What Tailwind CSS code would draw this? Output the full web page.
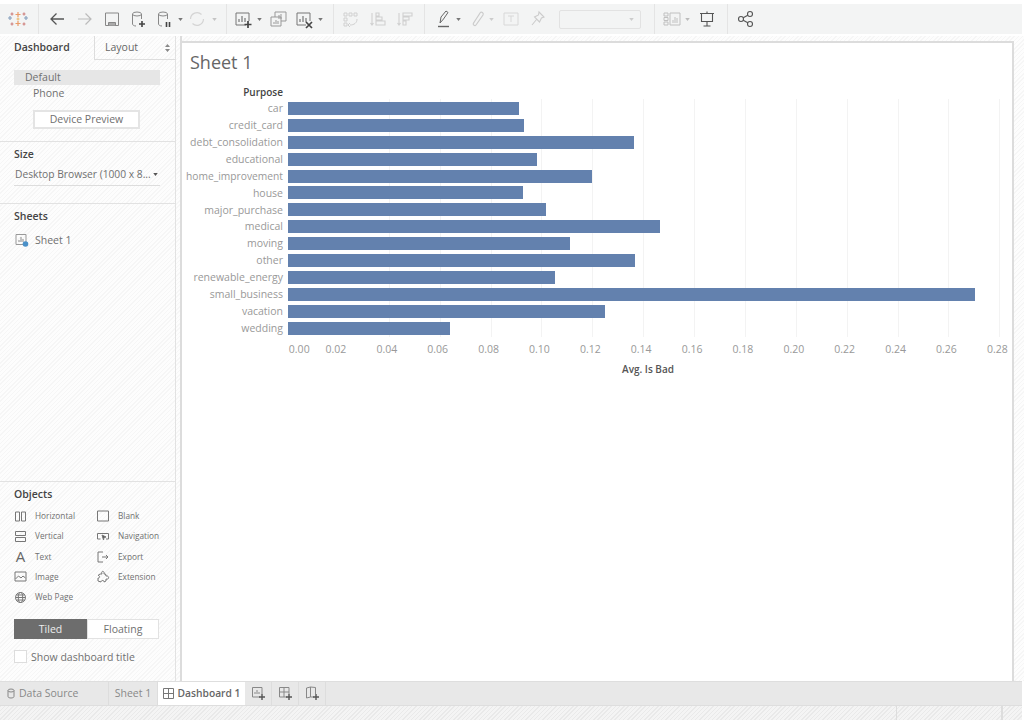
<!DOCTYPE html>
<html><head><meta charset="utf-8"><script src="https://cdn.jsdelivr.net/npm/@tailwindcss/browser@4"></script></head>
<body class="bg-white">
<div class="w-[1024px] h-[720px] overflow-hidden flex flex-col font-['Open_Sans',sans-serif] text-[#707070] text-[10.5px] leading-none">
  <!-- toolbar -->
  <div class="h-[4px] bg-white"></div>
  <div class="h-[30px] w-[1022px] bg-[#f3f4f4] flex items-center shrink-0">
    <svg class="w-[36px] h-5 opacity-70" viewBox="-8 -10 36 20"><g stroke-width="1.2" fill="none"><path d="M10-7v5M7.500-4.500h5M10 2v5M7.500 4.500h5" stroke="#e8762d"/><path d="M2-3v4M0-1h4M16-1h4M18-3v4" stroke="#5b7fa8"/><path d="M4-6.500v3M2.500-5h3M16-6.500v3M14.500-5h3M4 3.500v3M2.500 5h3M16 3.500v3M14.500 5h3" stroke="#c0504d"/><path d="M8.500 0h3M10-1.500v3" stroke="#e8a33d"/></g></svg>
    <div class="w-px h-[30px] bg-[#e4e4e4] ml-[2px]"></div>
    <svg class="w-5 h-5 ml-[8px]" viewBox="0 0 20 20" fill="none" stroke="#555" stroke-width="1.3"><path d="M17 10H4M9.500 4.500 4 10l5.500 5.500"/></svg>
    <svg class="w-5 h-5 ml-[8px]" viewBox="0 0 20 20" fill="none" stroke="#bbb" stroke-width="1.2"><path d="M3 10h13M10.500 4.500 16 10l-5.500 5.500"/></svg>
    <svg class="w-5 h-5 ml-[7px]" viewBox="0 0 20 20" fill="none" stroke="#888" stroke-width="1"><path d="M3.500 4h13v12.500h-13z"/><path d="M6.500 16.500v-3h7v3" fill="#aaa"/></svg>
    <svg class="w-5 h-5 ml-[6px]" viewBox="0 0 20 20" fill="none" stroke="#888" stroke-width="1"><ellipse cx="9" cy="5" rx="4.500" ry="2"/><path d="M4.500 5v10c0 1 1.500 2 3.500 2M13.500 5v5"/><path d="M14 12v6M11 15h6" stroke="#444" stroke-width="1.6"/></svg>
    <svg class="w-5 h-5 ml-[6px]" viewBox="0 0 20 20" fill="none" stroke="#888" stroke-width="1"><ellipse cx="9" cy="5" rx="4.500" ry="2"/><path d="M4.500 5v10c0 1 1.500 2 3.500 2M13.500 5v5"/><path d="M12.500 13v5M15.500 13v5" stroke="#444" stroke-width="1.6"/></svg>
    <svg class="w-[5px] h-[3px] ml-[4px] mr-px" viewBox="0 0 6 4"><path d="M0 0h6L3 4z" fill="#777"/></svg>
    <svg class="w-5 h-5 ml-[3px]" viewBox="0 0 20 20" fill="none" stroke="#d4d4d4" stroke-width="1.2"><path d="M3.500 10a6.500 6.500 0 0 1 11-4.500M16.500 10a6.500 6.500 0 0 1-11 4.500"/></svg>
    <svg class="w-[5px] h-[3px] ml-[5px] mr-px" viewBox="0 0 6 4"><path d="M0 0h6L3 4z" fill="#c4c4c4"/></svg>
    <div class="w-px h-[30px] bg-[#e4e4e4] ml-[8px]"></div>
    <svg class="w-5 h-5 ml-[6px]" viewBox="0 0 20 20" fill="none" stroke="#777" stroke-width="1"><path d="M13 16H3V4h13v8"/><path d="M6 13v-3M9 13V7M12 13V9" stroke-width="1.2"/><path d="M15 12v7M11.500 15.500h7" stroke="#444" stroke-width="1.7"/></svg>
    <svg class="w-[5px] h-[3px] ml-[4px] mr-px" viewBox="0 0 6 4"><path d="M0 0h6L3 4z" fill="#777"/></svg>
    <svg class="w-5 h-5 ml-[5px]" viewBox="0 0 20 20" fill="none" stroke="#999" stroke-width="1"><path d="M7 3h11v9H7z" fill="#f3f4f4"/><path d="M3 8h10v9H3z" fill="#f3f4f4"/><path d="M6 15v-2M8 15v-4M10 15v-3M11 10V6M13 10V5"/></svg>
    <svg class="w-5 h-5 ml-[6px]" viewBox="0 0 20 20" fill="none" stroke="#777" stroke-width="1"><path d="M12 16H3V4h13v8"/><path d="M6 13v-3M9 13V7M12 13V9" stroke-width="1.2"/><path d="m12 13 6 6m0-6-6 6" stroke="#444" stroke-width="1.7"/></svg>
    <svg class="w-[5px] h-[3px] ml-[4px] mr-px" viewBox="0 0 6 4"><path d="M0 0h6L3 4z" fill="#777"/></svg>
    <div class="w-px h-[30px] bg-[#e4e4e4] ml-[9px]"></div>
    <svg class="w-5 h-5 ml-[7px]" viewBox="0 0 20 20" fill="none" stroke="#d0d0d0" stroke-width="1"><path d="M3 4h3v3H3zM8 4h3v3H8zM13 4h3v3h-3zM3 9h3v3H3zM3 14h3v3H3zM16 10c0 4-3 6-7 6M9 14l-2 2 2 2"/></svg>
    <svg class="w-5 h-5 ml-[7px]" viewBox="0 0 20 20" fill="none" stroke="#d0d0d0" stroke-width="1.1"><path d="M4 4v12M2.500 14 4 16l1.500-2M8 4h3v3H8zM8 8h6v3H8zM8 12h9v4H8z"/></svg>
    <svg class="w-5 h-5 ml-[7px]" viewBox="0 0 20 20" fill="none" stroke="#d0d0d0" stroke-width="1.1"><path d="M4 4v12M2.500 14 4 16l1.500-2M8 4h9v3H8zM8 8h6v3H8zM8 12h3v4H8z"/></svg>
    <div class="w-px h-[30px] bg-[#e4e4e4] ml-[9px]"></div>
    <svg class="w-5 h-5 ml-[9px]" viewBox="0 0 20 20" fill="none" stroke="#666" stroke-width="1"><path d="M6 14 7 8l5-6 2 1.500-4.500 6.500z"/><path d="M4 17.500h11" stroke-width="1.4"/></svg>
    <svg class="w-[5px] h-[3px] ml-[2px] mr-px" viewBox="0 0 6 4"><path d="M0 0h6L3 4z" fill="#777"/></svg>
    <svg class="w-5 h-5 ml-[5px]" viewBox="0 0 20 20" fill="none" stroke="#ccc" stroke-width="1.2"><path d="M6 15 13 4c1.500-2 4 0 3 2l-7 10c-1 1.500-3.500 0-2.500-2l6-9"/></svg>
    <svg class="w-[5px] h-[3px] ml-[2px] mr-px" viewBox="0 0 6 4"><path d="M0 0h6L3 4z" fill="#ccc"/></svg>
    <svg class="w-5 h-5 ml-[6px]" viewBox="0 0 20 20" fill="none" stroke="#d8d8d8" stroke-width="1"><path d="M3 4h14v12H3zM7 7h6M10 7v6"/></svg>
    <svg class="w-5 h-5 ml-[7px]" viewBox="0 0 20 20" fill="none" stroke="#ccc" stroke-width="1.1"><path d="m11 3 5 5-2.500 1-2 4-5-5 4-2zM8.500 10.500 4 16"/></svg>
    <div class="w-[82px] h-[19px] ml-[11px] border border-[#e2e2e2] rounded-[2px] flex items-center justify-end pr-[6px]"><svg class="w-[5px] h-[3px]" viewBox="0 0 6 4"><path d="M0 0h6L3 4z" fill="#ccc"/></svg></div>
    <div class="w-px h-[30px] bg-[#e4e4e4] ml-[13px]"></div>
    <svg class="w-5 h-5 ml-[7px]" viewBox="0 0 20 20" fill="none" stroke="#c0c0c0" stroke-width="1"><path d="M2 4h4v3H2zM2 8.500h4v3H2zM2 13h4v3H2zM8 4h10v12H8z"/><path d="M11 14v-3M13 14V8M15 14v-5"/></svg>
    <svg class="w-[5px] h-[3px] ml-[3px] mr-px" viewBox="0 0 6 4"><path d="M0 0h6L3 4z" fill="#bbb"/></svg>
    <svg class="w-5 h-5 ml-[6px]" viewBox="0 0 20 20" fill="none" stroke="#555" stroke-width="1.1"><path d="M3 4.500h14M4.500 4.500v8h11v-8M10 12.500V17M6.500 17h7M10 2.500v2"/></svg>
    <div class="w-px h-[30px] bg-[#e4e4e4] ml-[10px]"></div>
    <svg class="w-5 h-5 ml-[8px]" viewBox="0 0 20 20" fill="none" stroke="#555" stroke-width="1.1"><circle cx="5" cy="10" r="2.500"/><circle cx="14" cy="5" r="2.500"/><circle cx="14" cy="15" r="2.500"/><path d="m7.200 8.800 4.600-2.600M7.200 11.200l4.600 2.600"/></svg>
  </div>
  <div class="h-[2px] shrink-0"></div>

  <div class="flex h-[645px] shrink-0 bg-[repeating-linear-gradient(135deg,#f6f6f6_0,#f6f6f6_1px,#fdfdfd_1px,#fdfdfd_3px)]">
    <!-- left panel -->
    <aside class="w-[176px] shrink-0 border-r border-[#e2e2e2] flex flex-col">
      <div class="flex h-[24px] shrink-0">
        <div class="w-[94px] pl-[14px] flex items-center font-semibold text-[#444] -mt-px">Dashboard</div>
        <div class="flex-1 flex items-center justify-between pl-[10px] pr-[5px] border-l border-b border-[#ddd] text-[#666]">Layout<svg class="w-[5px] h-[8px]" viewBox="0 0 5 8" fill="#888"><path d="M2.500 0 5 3H0zM2.500 8 0 5h5z"/></svg></div>
      </div>
      <div class="h-[82px] shrink-0 border-b border-[#e2e2e2] pt-[10px] pl-[14px]">
        <div class="w-[146px] h-[15px] bg-[#e6e6e6] pl-[11px] flex items-center">Default</div>
        <div class="pl-[19px] mt-[2px] h-[12px] flex items-center">Phone</div>
        <div class="ml-[19px] mt-[11px] w-[107px] h-[19px] border-2 border-[#e4e4e4] bg-white flex items-center justify-center">Device Preview</div>
      </div>
      <div class="h-[62px] shrink-0 border-b border-[#e2e2e2] pl-[14px] pt-[7px]">
        <div class="font-semibold text-[#444] h-[10px] flex items-center">Size</div>
        <div class="w-[146px] h-[22px] mt-[5px] border-b border-[#ddd] flex items-center justify-between pr-[2px] whitespace-nowrap">
          <span class="pl-px text-[10.250px]">Desktop Browser (1000 x 8...</span><svg class="w-[5px] h-[3px] shrink-0" viewBox="0 0 6 4"><path d="M0 0h6L3 4z" fill="#555"/></svg>
        </div>
      </div>
      <div class="h-[278px] shrink-0 border-b border-[#e2e2e2] pl-[14px] pt-[7px]">
        <div class="font-semibold text-[#444] h-[10px] flex items-center">Sheets</div>
        <div class="flex items-center mt-[11px] h-[16px]">
          <svg class="w-[14px] h-[14px] ml-px" viewBox="0 0 14 14" fill="none"><path d="M1 1.500h10v10H1z" stroke="#999"/><path d="M4 9V7M6 9V4M8 9V6" stroke="#888"/><circle cx="10.500" cy="11" r="2.800" fill="#4a90c8"/></svg>
          <span class="ml-[6px]">Sheet 1</span>
        </div>
      </div>
      <div class="pl-[14px] pt-[7px] flex-1 min-h-0">
        <div class="font-semibold text-[#444] h-[10px] flex items-center">Objects</div>
        <div class="grid grid-cols-[83px_80px] auto-rows-[20.250px] mt-[7px] text-[8.250px] text-[#707070]">
          <div class="flex items-center gap-[8px]"><svg class="w-[13px] h-[13px]" viewBox="0 0 13 13" fill="none" stroke="#777"><path d="M1.500 2h4v9h-4zM7.500 2h4v9h-4z"/></svg>Horizontal</div>
          <div class="flex items-center gap-[9px]"><svg class="w-[12px] h-[12px]" viewBox="0 0 12 12" fill="none" stroke="#777"><path d="M.5 1h11v10H.5z"/></svg>Blank</div>
          <div class="flex items-center gap-[8px]"><svg class="w-[13px] h-[13px]" viewBox="0 0 13 13" fill="none" stroke="#777"><path d="M1.500 1.500h10v4h-10zM1.500 7.500h10v4h-10z"/></svg>Vertical</div>
          <div class="flex items-center gap-[9px]"><svg class="w-[12px] h-[12px]" viewBox="0 0 12 12" fill="none" stroke="#777"><path d="M9 9h2.500V3.500H.5V9h3"/><path d="m5 5 4 2-2 .5L6.500 10z" fill="#555"/></svg>Navigation</div>
          <div class="flex items-center gap-[8px]"><span class="w-[13px] text-center text-[15px] text-[#666]">A</span>Text</div>
          <div class="flex items-center gap-[9px]"><svg class="w-[12px] h-[12px]" viewBox="0 0 12 12" fill="none" stroke="#777"><path d="M6 1H1v10h5M5 6h6M9 4l2 2-2 2"/></svg>Export</div>
          <div class="flex items-center gap-[8px]"><svg class="w-[13px] h-[13px]" viewBox="0 0 13 13" fill="none" stroke="#777"><path d="M1 2h11v9H1z"/><path d="m1.500 9 3-3 2.500 2 2-2 2.500 2"/></svg>Image</div>
          <div class="flex items-center gap-[8px]"><svg class="w-[13px] h-[13px]" viewBox="0 0 13 13" fill="none" stroke="#777"><path d="M3 4h2C3.500 .5 8 .5 7 4h1.500l.5 2c3-1 4 4 0 3v2l-2 1c.5-2-3-2-3 0l-3-1V8c2 .5 2-3 0-2.500z"/></svg>Extension</div>
          <div class="flex items-center gap-[8px]"><svg class="w-[13px] h-[13px]" viewBox="0 0 13 13" fill="none" stroke="#777"><circle cx="6.500" cy="6.500" r="5"/><ellipse cx="6.500" cy="6.500" rx="2.200" ry="5"/><path d="M1.500 6.500h10M2.200 4h8.600M2.200 9h8.600"/></svg>Web Page</div>
        </div>
        <div class="flex w-[145px] h-[20px] mt-[12px]">
          <div class="w-[73px] bg-[#6d6d6d] text-[#eee] flex items-center justify-center">Tiled</div>
          <div class="w-[72px] bg-white border border-[#e2e2e2] flex items-center justify-center">Floating</div>
        </div>
        <div class="flex items-center mt-[11px] gap-[4px]"><div class="w-[13px] h-[13px] border border-[#ddd] bg-white"></div>Show dashboard title</div>
      </div>
    </aside>
    <div class="w-[6px] shrink-0 border-r-2 border-[#dcdcdc]"></div>
    <!-- canvas -->
    <main class="w-[832px] shrink-0 mt-[5px] bg-white border-t-2 border-r-2 border-[#dcdcdc] pl-[8px] pt-[8px] relative">
      <h1 class="text-[18px] leading-[22px] text-[#666]">Sheet 1</h1>
      <div class="mt-[12px] -ml-[7px] w-[826px]">
        <div class="flex items-center h-[13px]"><div class="w-[100px] text-right font-semibold text-[#444] text-[10px]">Purpose</div></div>
        <div class="relative ml-[105px] w-[720px] h-[238px] mt-[1px]">
          <div class="absolute inset-0 flex pl-[50.880px]">
            <div class="w-[50.880px] shrink-0 border-r border-[#f3f3f3]"></div><div class="w-[50.880px] shrink-0 border-r border-[#f3f3f3]"></div><div class="w-[50.880px] shrink-0 border-r border-[#f3f3f3]"></div><div class="w-[50.880px] shrink-0 border-r border-[#f3f3f3]"></div><div class="w-[50.880px] shrink-0 border-r border-[#f3f3f3]"></div><div class="w-[50.880px] shrink-0 border-r border-[#f3f3f3]"></div><div class="w-[50.880px] shrink-0 border-r border-[#f3f3f3]"></div><div class="w-[50.880px] shrink-0 border-r border-[#f3f3f3]"></div><div class="w-[50.880px] shrink-0 border-r border-[#f3f3f3]"></div><div class="w-[50.880px] shrink-0 border-r border-[#f3f3f3]"></div><div class="w-[50.880px] shrink-0 border-r border-[#f3f3f3]"></div><div class="w-[50.880px] shrink-0 border-r border-[#f3f3f3]"></div><div class="w-[50.880px] shrink-0 border-r border-[#f3f3f3]"></div>
          </div>
          <div class="absolute -left-[105px] top-[1px] w-[825px] flex flex-col whitespace-nowrap">
            <div class="flex items-center h-[16.900px]"><span class="w-[100px] text-right text-[#999]">car</span><span class="ml-[5px] h-[13px] bg-[#6381ae]" style="width:231px"></span></div>
            <div class="flex items-center h-[16.900px]"><span class="w-[100px] text-right text-[#999]">credit_card</span><span class="ml-[5px] h-[13px] bg-[#6381ae]" style="width:236px"></span></div>
            <div class="flex items-center h-[16.900px]"><span class="w-[100px] text-right text-[#999]">debt_consolidation</span><span class="ml-[5px] h-[13px] bg-[#6381ae]" style="width:346px"></span></div>
            <div class="flex items-center h-[16.900px]"><span class="w-[100px] text-right text-[#999]">educational</span><span class="ml-[5px] h-[13px] bg-[#6381ae]" style="width:249px"></span></div>
            <div class="flex items-center h-[16.900px]"><span class="w-[100px] text-right text-[#999] text-[10.250px]">home_improvement</span><span class="ml-[5px] h-[13px] bg-[#6381ae]" style="width:304px"></span></div>
            <div class="flex items-center h-[16.900px]"><span class="w-[100px] text-right text-[#999]">house</span><span class="ml-[5px] h-[13px] bg-[#6381ae]" style="width:235px"></span></div>
            <div class="flex items-center h-[16.900px]"><span class="w-[100px] text-right text-[#999]">major_purchase</span><span class="ml-[5px] h-[13px] bg-[#6381ae]" style="width:258px"></span></div>
            <div class="flex items-center h-[16.900px]"><span class="w-[100px] text-right text-[#999]">medical</span><span class="ml-[5px] h-[13px] bg-[#6381ae]" style="width:372px"></span></div>
            <div class="flex items-center h-[16.900px]"><span class="w-[100px] text-right text-[#999]">moving</span><span class="ml-[5px] h-[13px] bg-[#6381ae]" style="width:282px"></span></div>
            <div class="flex items-center h-[16.900px]"><span class="w-[100px] text-right text-[#999]">other</span><span class="ml-[5px] h-[13px] bg-[#6381ae]" style="width:347px"></span></div>
            <div class="flex items-center h-[16.900px]"><span class="w-[100px] text-right text-[#999]">renewable_energy</span><span class="ml-[5px] h-[13px] bg-[#6381ae]" style="width:267px"></span></div>
            <div class="flex items-center h-[16.900px]"><span class="w-[100px] text-right text-[#999]">small_business</span><span class="ml-[5px] h-[13px] bg-[#6381ae]" style="width:687px"></span></div>
            <div class="flex items-center h-[16.900px]"><span class="w-[100px] text-right text-[#999]">vacation</span><span class="ml-[5px] h-[13px] bg-[#6381ae]" style="width:317px"></span></div>
            <div class="flex items-center h-[16.900px]"><span class="w-[100px] text-right text-[#999]">wedding</span><span class="ml-[5px] h-[13px] bg-[#6381ae]" style="width:162px"></span></div>
          </div>
        </div>
        <div class="flex ml-[105px] mt-[6px] text-[#999] h-[12px] items-center whitespace-nowrap">
          <span class="w-[22.500px] shrink-0 text-center">0.00</span>
          <span class="w-[50.880px] shrink-0 text-center">0.02</span><span class="w-[50.880px] shrink-0 text-center">0.04</span><span class="w-[50.880px] shrink-0 text-center">0.06</span><span class="w-[50.880px] shrink-0 text-center">0.08</span><span class="w-[50.880px] shrink-0 text-center">0.10</span><span class="w-[50.880px] shrink-0 text-center">0.12</span><span class="w-[50.880px] shrink-0 text-center">0.14</span><span class="w-[50.880px] shrink-0 text-center">0.16</span><span class="w-[50.880px] shrink-0 text-center">0.18</span><span class="w-[50.880px] shrink-0 text-center">0.20</span><span class="w-[50.880px] shrink-0 text-center">0.22</span><span class="w-[50.880px] shrink-0 text-center">0.24</span><span class="w-[50.880px] shrink-0 text-center">0.26</span><span class="w-[50.880px] shrink-0 text-center">0.28</span>
        </div>
        <div class="ml-[105px] w-[720px] mt-[9px] text-center font-semibold text-[#555] text-[10px]">Avg. Is Bad</div>
      </div>
    </main>
  </div>
  <!-- tabs -->
  <div class="h-[25px] w-[1022px] shrink-0 bg-[#e8e8e8] border-t border-b border-[#dedede] flex items-stretch">
    <div class="w-[109px] border-r border-[#ddd] flex items-center pl-[7px] gap-[4px] text-[#888]"><svg class="w-[8px] h-[11px]" viewBox="0 0 8 11" fill="none" stroke="#888"><ellipse cx="4" cy="2.500" rx="3" ry="1.500"/><path d="M1 2.500v6c0 2 6 2 6 0v-6"/></svg>Data Source</div>
    <div class="w-[49px] border-r border-[#ddd] flex items-center justify-center text-[#888]">Sheet 1</div>
    <div class="w-[87px] bg-white flex items-center justify-center gap-[4px] font-semibold text-[#666] text-[10.250px]"><svg class="w-[11px] h-[11px]" viewBox="0 0 11 11" fill="none" stroke="#777"><path d="M.5.500h10v10H.5zM5.500.5v10M.5 5.500h10"/></svg>Dashboard 1</div>
    <div class="w-[27px] border-r border-[#ddd] flex items-center justify-center"><svg class="w-[15px] h-[15px]" viewBox="0 0 15 15" fill="none" stroke="#888"><path d="M9 11H1.500V1.500H11V8"/><path d="M4 8V6M6 8V4M8 8V6"/><path d="M11 8v6M8 11h6" stroke="#555" stroke-width="1.400"/></svg></div>
    <div class="w-[27px] border-r border-[#ddd] flex items-center justify-center"><svg class="w-[15px] h-[15px]" viewBox="0 0 15 15" fill="none" stroke="#888"><path d="M9 11H1.500V1.500H11V8M6 1.500V11M1.500 6H11"/><path d="M11 8v6M8 11h6" stroke="#555" stroke-width="1.400"/></svg></div>
    <div class="w-[27px] border-r border-[#ddd] flex items-center justify-center"><svg class="w-[15px] h-[15px]" viewBox="0 0 15 15" fill="none" stroke="#888"><path d="M9 11H5.500l-4 1V2l4-1 5 .5V8M5.500 1v10"/><path d="M11 8v6M8 11h6" stroke="#555" stroke-width="1.400"/></svg></div>
  </div>
  <!-- status -->
  <div class="flex-1 w-[1022px] flex bg-[repeating-linear-gradient(135deg,#e9e9e9_0,#e9e9e9_1px,#f4f4f4_1px,#f4f4f4_3px)]">
    <div class="w-[897px] border-r border-[#ddd]"></div>
    <div class="w-[106px] border-r-2 border-[#ddd]"></div>
  </div>
</div>
</body></html>
